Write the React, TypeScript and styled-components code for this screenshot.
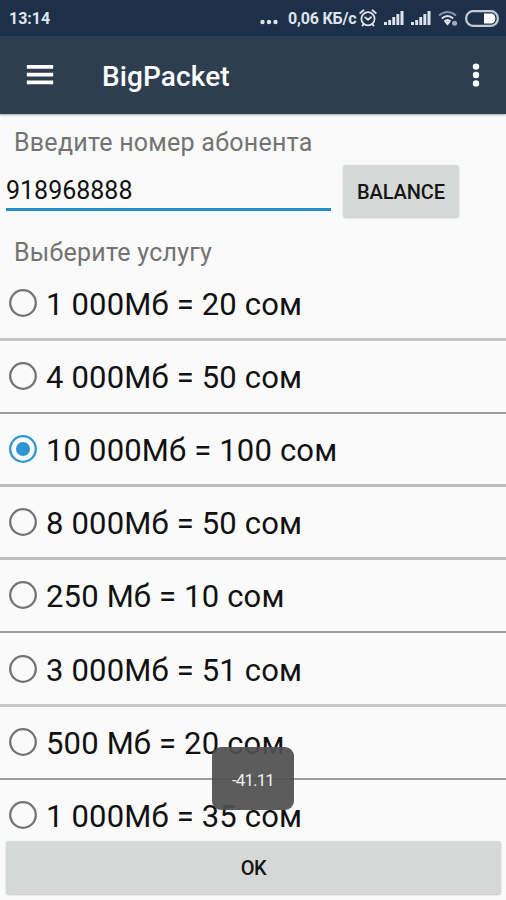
import React, { useState } from 'react';
import styled, { createGlobalStyle } from 'styled-components';

const GlobalStyle = createGlobalStyle`
  * { box-sizing: border-box; }
  body { margin: 0; background: #fafafa; font-family: Roboto, sans-serif; }
`;

const Screen = styled.div`
  position: relative;
  width: 506px;
  height: 900px;
  overflow: hidden;
  display: flex;
  flex-direction: column;
  background: #fafafa;
  color: #111;
`;

const StatusBar = styled.header`
  flex: none;
  height: 36px;
  padding: 0 7px 0 9px;
  display: flex;
  align-items: center;
  justify-content: space-between;
  background: #1c304a;
  color: #dfe4ea;
  font-size: 16px;
  font-weight: 700;
  line-height: 36px;
`;

const Clock = styled.span`
  padding-top: 2px;
`;

const StatusIcons = styled.div`
  display: flex;
  align-items: center;
  height: 36px;
`;

const Speed = styled.span`
  width: 69px;
  margin: 2px 2px 0 8px;
  white-space: nowrap;
  letter-spacing: -0.2px;
`;

const StatusIcon = styled.svg<{ $gap?: number }>`
  display: block;
  flex: none;
  margin-left: ${({ $gap = 0 }) => $gap}px;
`;

const MoreDots = styled(StatusIcon)`
  margin: 8px 2px 0 -2px;
`;

const AppBar = styled.nav`
  flex: none;
  height: 78px;
  padding: 0 25px 0 26px;
  display: flex;
  align-items: center;
  background: #2d3e50;
  color: #fff;
  box-shadow: 0 1px 2px rgba(0, 0, 0, 0.35);
`;

const IconButton = styled.button`
  display: flex;
  padding: 0;
  border: 0;
  background: none;
  color: inherit;
`;

const Title = styled.h1`
  flex: 1;
  margin: 4px 0 0 48px;
  font-size: 28px;
  font-weight: 500;
  line-height: 36px;
  letter-spacing: 0.1px;
`;

const Label = styled.label`
  display: block;
  flex: none;
  height: 32px;
  margin-left: 14px;
  color: #737373;
  font-size: 25px;
  line-height: 32px;
  letter-spacing: 0.25px;
`;

const NumberLabel = styled(Label)`
  margin-top: 13px;
`;

const NumberRow = styled.div`
  flex: none;
  display: flex;
  height: 53px;
  margin: 6px 0 19px 6px;
`;

const NumberInput = styled.input`
  width: 325px;
  height: 46px;
  padding: 7px 0 0;
  border: 0;
  border-bottom: 3px solid #238cc5;
  outline: 0;
  background: none;
  color: #111;
  font: 400 25px Roboto, sans-serif;
`;

const Button = styled.button`
  flex: none;
  border: 0;
  border-radius: 3px;
  background: #d6d8d7;
  color: #151515;
  font: 500 20px Roboto, sans-serif;
  box-shadow: 0 1px 2px rgba(0, 0, 0, 0.22);
`;

const BalanceButton = styled(Button)`
  width: 116px;
  height: 52px;
  margin-left: 12px;
  padding: 1px 0 0;
  letter-spacing: -0.1px;
`;

const OkButton = styled(Button)`
  height: 53px;
  margin: 0 5px 6px 6px;
  padding: 0;
  letter-spacing: -0.4px;
`;

const ServiceList = styled.div`
  flex: 1;
  min-height: 0;
  margin-top: -1px;
  overflow: hidden;
`;

type Divider = 'soft' | 'medium' | 'dark';

const dividers: Record<Divider, string> = {
  soft: '3px solid #c6c6c6',
  medium: '3px solid #bcbcbc',
  dark: '2px solid #9d9d9d',
};

const Service = styled.label<{ $divider: Divider }>`
  display: flex;
  align-items: center;
  height: 73.1px;
  padding-bottom: ${({ $divider }) => ($divider === 'dark' ? 1 : 0)}px;
  border-bottom: ${({ $divider }) => dividers[$divider]};
`;

const HiddenRadio = styled.input`
  position: absolute;
  opacity: 0;
  pointer-events: none;
`;

const RadioMark = styled.svg`
  flex: none;
  margin-left: 8px;
`;

const ServiceText = styled.span`
  margin: 4px 0 0 8px;
  font-size: 31px;
  line-height: 40px;
  letter-spacing: 0.17px;
  white-space: nowrap;
`;

const Toast = styled.div`
  position: absolute;
  left: 212px;
  top: 747px;
  width: 82px;
  height: 63px;
  padding-top: 2px;
  display: flex;
  align-items: center;
  justify-content: center;
  border-radius: 9px;
  background: rgba(80, 80, 80, 0.93);
  color: #eee;
  font-size: 17px;
  letter-spacing: -0.9px;
`;

const services: { name: string; divider: Divider }[] = [
  { name: '1 000Мб = 20 сом', divider: 'soft' },
  { name: '4 000Мб = 50 сом', divider: 'dark' },
  { name: '10 000Мб = 100 сом', divider: 'medium' },
  { name: '8 000Мб = 50 сом', divider: 'medium' },
  { name: '250 Мб = 10 сом', divider: 'dark' },
  { name: '3 000Мб = 51 сом', divider: 'soft' },
  { name: '500 Мб = 20 сом', divider: 'dark' },
  { name: '1 000Мб = 35 сом', divider: 'soft' },
];

const Signal = ({ gap }: { gap: number }) => (
  <StatusIcon $gap={gap} width="20" height="16" viewBox="0 0 20 16" fill="#dfe4ea">
    <path d="M0 12h3v3H0zM4.2 10h2.9v5H4.2zM8.3 7h2.9v8H8.3zM12.4 4h2.9v11h-2.9zM16.5 1h3v14h-3z" />
  </StatusIcon>
);

const Radio = ({ checked }: { checked: boolean }) => (
  <RadioMark width="30" height="30" viewBox="0 0 30 30" fill="none">
    <circle cx="15" cy="15" r="12.8" stroke={checked ? '#2e95d3' : '#747474'} strokeWidth="2.3" />
    {checked && <circle cx="15" cy="15" r="7" fill="#2e95d3" />}
  </RadioMark>
);

export default function App() {
  const [selected, setSelected] = useState(2);
  return (
    <>
      <GlobalStyle />
      <Screen>
        <StatusBar>
          <Clock>13:14</Clock>
          <StatusIcons>
            <MoreDots width="18" height="6" viewBox="0 0 18 6" fill="#dfe4ea">
              <circle cx="2.5" cy="3" r="2.2" />
              <circle cx="9" cy="3" r="2.2" />
              <circle cx="15.5" cy="3" r="2.2" />
            </MoreDots>
            <Speed>0,06 КБ/с</Speed>
            <StatusIcon width="18" height="18" viewBox="0 0 18 18" fill="none" stroke="#dfe4ea" strokeWidth="1.8" strokeLinecap="round">
              <circle cx="9" cy="9.8" r="6.6" />
              <path d="M1.2 4 4.5 1.3M13.5 1.3 16.8 4M6.2 8.4 9 10.8l3-2.6M4.7 15l-1.2 1.6M13.3 15l1.2 1.6" />
            </StatusIcon>
            <Signal gap={7} />
            <Signal gap={7} />
            <StatusIcon $gap={7} width="21" height="17" viewBox="0 0 21 17" fill="none" stroke="#dfe4ea" strokeWidth="2">
              <path d="M1 5.5Q9.5-1.5 18 5.5" opacity=".55" />
              <path d="M3.8 8.5q5.7-5 11.4 0M6.4 11.5q3.1-2.8 6.2 0" />
              <path d="m6.7 12.3 2.8 3.2 2.8-3.2q-2.8-2-5.6 0Z" fill="#dfe4ea" stroke="none" />
              <circle cx="16.6" cy="13.3" r="2.5" fill="#9facb9" stroke="none" />
            </StatusIcon>
            <StatusIcon $gap={6} width="34" height="17" viewBox="0 0 34 17">
              <rect x="1.2" y="1.2" width="31.6" height="14.6" rx="6.8" fill="none" stroke="#c3cad3" strokeWidth="2.3" />
              <path d="M19 3.5h7.5Q30.3 4 30.3 8.5T26.5 13.5H19z" fill="#fff" />
            </StatusIcon>
          </StatusIcons>
        </StatusBar>
        <AppBar>
          <IconButton aria-label="Menu">
            <svg width="28" height="22" viewBox="0 0 28 22" fill="#fff">
              <path d="M.8 1h26.4v3.7H.8zM.8 8.8h26.4v3.7H.8zM.8 16.6h26.4v3.7H.8z" />
            </svg>
          </IconButton>
          <Title>BigPacket</Title>
          <IconButton aria-label="More">
            <svg width="10" height="26" viewBox="0 0 10 26" fill="#fff">
              <circle cx="5" cy="4.6" r="3.2" />
              <circle cx="5" cy="13" r="3.2" />
              <circle cx="5" cy="21.4" r="3.2" />
            </svg>
          </IconButton>
        </AppBar>
        <NumberLabel htmlFor="number">Введите номер абонента</NumberLabel>
        <NumberRow>
          <NumberInput id="number" defaultValue="918968888" />
          <BalanceButton>BALANCE</BalanceButton>
        </NumberRow>
        <Label as="div">Выберите услугу</Label>
        <ServiceList>
          {services.map(({ name, divider }, i) => (
            <Service key={name} $divider={divider}>
              <HiddenRadio type="radio" name="service" checked={selected === i} onChange={() => setSelected(i)} />
              <Radio checked={selected === i} />
              <ServiceText>{name}</ServiceText>
            </Service>
          ))}
        </ServiceList>
        <OkButton>OK</OkButton>
        <Toast>-41.11</Toast>
      </Screen>
    </>
  );
}
